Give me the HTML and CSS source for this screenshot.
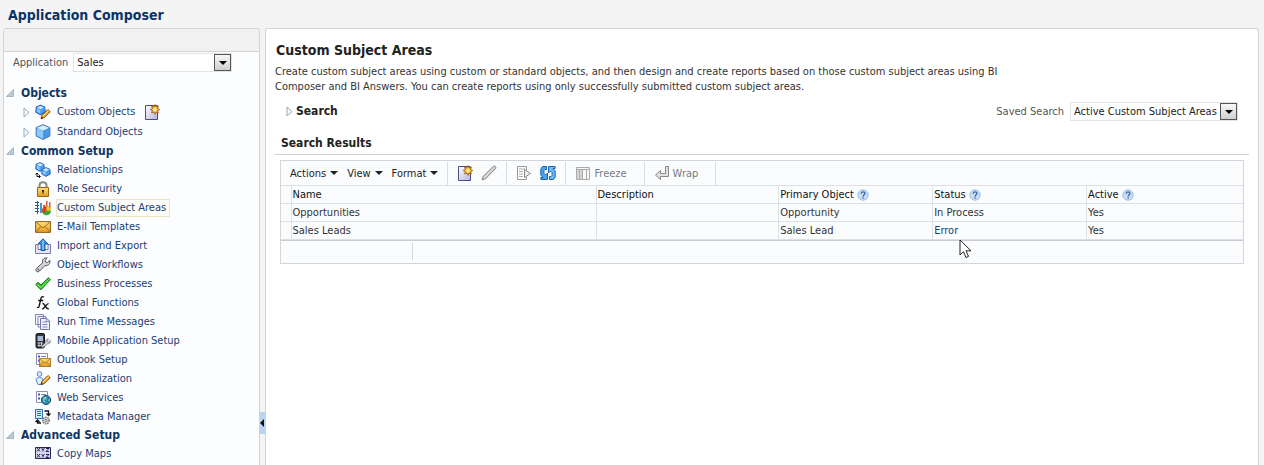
FILE: index.html
```
<!DOCTYPE html>
<html lang="en">
<head>
<meta charset="utf-8">
<title>Application Composer</title>
<link rel="stylesheet" href="styles.css">
</head>
<body>
<svg class="defs" aria-hidden="true">
  <defs>
    <linearGradient id="g-blue" x1="0" y1="0" x2="1" y2="1"><stop offset="0" stop-color="#e3f3ff"/><stop offset="1" stop-color="#3b8de0"/></linearGradient>
    <linearGradient id="g-gold" x1="0" y1="0" x2="0" y2="1"><stop offset="0" stop-color="#ffe27a"/><stop offset="1" stop-color="#e29a1c"/></linearGradient>
    <linearGradient id="g-page" x1="0" y1="0" x2="1" y2="1"><stop offset="0" stop-color="#ffffff"/><stop offset="1" stop-color="#b3b3dc"/></linearGradient>
    <symbol id="cube" viewBox="0 0 16 16">
      <path d="M8 .7 14.800 3.600V12L8 15.400 1.200 12V3.600Z" fill="#5aa8ee" stroke="#2466b0"/>
      <path d="M8 1.200 14.300 3.800 8 6.600 1.700 3.800Z" fill="#d9eeff"/>
      <path d="M1.700 4.200 8 7V14.900L1.700 11.700Z" fill="#8fc8fa"/>
      <path d="M8 7 14.300 4.200V11.700L8 14.900Z" fill="#4a97e4"/>
    </symbol>
    <symbol id="ball" viewBox="0 0 16 16">
      <path d="M8 1 14 3.500 15 11 8 15 1 11 2 3.500Z" fill="#4c9df0" stroke="#1d63bd" stroke-width="1.500" stroke-linejoin="round"/>
      <path d="M8 2 13 4 8 7 3 4Z" fill="#cfeaff"/><path d="M3 5.500 7.500 8V13.500L2.500 10.500Z" fill="#8ac6fb"/>
    </symbol>
    <symbol id="pencil-gold" viewBox="0 0 16 16">
      <path d="M1.500 14.500 3 10 11.500 1.500 14.800 4.600 6 13.300Z" fill="#f7ad30" stroke="#7a3d0c" stroke-width="1.400"/>
      <path d="M4.500 10.800 12.500 3" stroke="#ffe7a0" stroke-width="1.400"/><path d="M1.200 15 2.200 12 4.300 14Z" fill="#26160a"/>
    </symbol>
    <symbol id="new-page" viewBox="0 0 16 16">
      <path d="M1.500 1.500H13.500V15.500H1.500Z" fill="url(#g-page)" stroke="#4b4b86"/>
      <path d="M11 .6 12 3 14.400 2.300 13.600 4.600 15.700 5.600 13.600 6.600 14.400 8.900 12 8.100 11 10.400 10 8.100 7.600 8.900 8.400 6.600 6.300 5.600 8.400 4.600 7.600 2.300 10 3Z" fill="#ffc728" stroke="#9c4c12" stroke-width=".8"/>
      <circle cx="11" cy="5.600" r="1.600" fill="#fff3a8"/>
    </symbol>
    <symbol id="wrench" viewBox="0 0 16 16">
      <path d="M14.900 3.300 12.500 5.500 10.500 5 10 3.200 12.200 1.100C10 .3 7.600 1.600 7.400 4.200L7.600 5.800 1.500 11.400C.3 12.500 1 15 3.200 14.900L4.400 14.200 10 8.500C13.400 9 15.600 6.600 14.900 3.300Z" fill="#d6d6da" stroke="#55555c"/>
      <circle cx="3.400" cy="12.600" r=".9" fill="#55555c"/>
    </symbol>
    <symbol id="mail" viewBox="0 0 16 12">
      <path d="M.6.6H15.400V11.400H.6Z" fill="url(#g-gold)" stroke="#935f12"/>
      <path d="M1 1 8 7 15 1M1 11 6 5.400M15 11 10 5.400" fill="none" stroke="#a9681a"/>
    </symbol>
    <symbol id="help" viewBox="0 0 12 12">
      <circle cx="6" cy="6" r="5.200" fill="#c9def4" stroke="#9fbfe3"/>
      <path d="M4.100 4.700C4.100 2.200 8 2.300 8 4.400 8 5.800 6.100 5.700 6.100 7.400" fill="none" stroke="#2d5f9e" stroke-width="1.200"/><path d="M5.400 8.300H6.800V9.500H5.400Z" fill="#2d5f9e"/>
    </symbol>
    <symbol id="expand" viewBox="0 0 7 11"><path d="M1 1 6 5.500 1 10Z" fill="#f4f9fc" stroke="#92acbd"/></symbol>
    <symbol id="collapse" viewBox="0 0 8 8"><path d="M7.500 .5V7.500H.5Z" fill="#b9cbd8" stroke="#a3b7c6"/></symbol>
    <symbol id="down" viewBox="0 0 8 4"><path d="M0 0H8L4 4Z" fill="currentColor"/></symbol>
    <symbol id="list-doc" viewBox="0 0 16 16">
      <path d="M1.500 1.500H12.500V12.500H1.500Z" fill="#fff" stroke="#8a8cbb"/>
      <path d="M3 4.500H5M3 8.500H5" stroke="#3c5db5" stroke-width="2"/><path d="M6 4.500H11M6 8.500H10" stroke="#8185b5"/>
    </symbol>
  </defs>
</svg>

<header class="app-header"><h1>Application Composer</h1></header>

<div class="workspace">
  <aside class="sidebar">
    <div class="sidebar-band"></div>
    <div class="app-picker">
      <label for="application">Application</label>
      <span class="picker">
        <select id="application"><option>Sales</option></select>
        <span class="picker-arrow"><svg><use href="#down"/></svg></span>
      </span>
    </div>

    <nav class="tree">
      <h2><svg class="collapse"><use href="#collapse"/></svg>Objects</h2>
      <ul class="objects">
        <li><svg class="expand"><use href="#expand"/></svg>
          <svg class="icon" viewBox="0 0 16 16"><use href="#ball" width="11" height="12"/><use href="#pencil-gold" x="5" y="4" width="11" height="12"/></svg>
          <a href="#">Custom Objects</a>
          <button class="icon-button" aria-label="New custom object"><svg class="icon"><use href="#new-page"/></svg></button></li>
        <li><svg class="expand"><use href="#expand"/></svg><svg class="icon"><use href="#cube"/></svg><a href="#">Standard Objects</a></li>
      </ul>

      <h2><svg class="collapse"><use href="#collapse"/></svg>Common Setup</h2>
      <ul>
        <li><svg class="icon" viewBox="0 0 16 16"><use href="#ball" width="10" height="10"/><use href="#ball" x="6" y="5" width="10" height="10"/><path d="M2 11V14.500H5M.5 12.500 2 11 3.500 12.500M4 13 5.500 14.500 4 16" fill="none" stroke="#111"/></svg><a href="#">Relationships</a></li>
        <li><svg class="icon" viewBox="0 0 16 16"><path d="M4.500 8V4.500C4.500.3 11.500.3 11.500 4.500V8" fill="none" stroke="#8b8b8b" stroke-width="2"/><path d="M2.500 6.500H13.500V15.500H2.500Z" fill="url(#g-gold)" stroke="#9c6310"/><path d="M7 9H9V10.800H8.500V13H7.500V10.800H7Z" fill="#3d2505"/></svg><a href="#">Role Security</a></li>
        <li><svg class="icon" viewBox="0 0 16 16"><path d="M2.500 1V14M0 2.500H4M0 5.500H4M0 8.500H4M0 11.500H4" stroke="#2c5c96"/><path d="M5 3H7V13H5Z" fill="#4b91dc"/><path d="M8 5H10V12H8ZM11 1H12.500V8H11ZM14 2H15.500V8H14Z" fill="#dc5a32"/><circle cx="11.500" cy="10.800" r="4.500" fill="#35a83a"/><path d="M11.500 10.800V6.300A4.500 4.500 0 0 0 8 13.600Z" fill="#e33a24"/><path d="M11.500 10.800V6.300A4.500 4.500 0 0 1 16 10.800Z" fill="#ffbc26"/></svg><a class="selected" href="#">Custom Subject Areas</a></li>
        <li><svg class="icon"><use href="#mail"/></svg><a href="#">E-Mail Templates</a></li>
        <li><svg class="icon" viewBox="0 0 16 16"><path d="M.5 6.500H3V11.500H13V6.500H15.500V15.500H.5Z" fill="#e6e7f5" stroke="#777aae"/><path d="M8 .8 13 6H10V12.500H6V6H3Z" fill="#3c94ec" stroke="#154f9d"/><path d="M8 2.500V12" stroke="#a6dafd"/></svg><a href="#">Import and Export</a></li>
        <li><svg class="icon"><use href="#wrench"/></svg><a href="#">Object Workflows</a></li>
        <li><svg class="icon" viewBox="0 0 16 16"><path d="M.7 8.500 3 6.300 6 9 13.300 1.800 15.400 3.600 6 13.800Z" fill="#35c12e" stroke="#137b13"/><path d="M2 8.300 6 11.600 14 3.200" fill="none" stroke="#8bea6f"/></svg><a href="#">Business Processes</a></li>
        <li><svg class="icon" viewBox="0 0 16 16"><path d="M8.800 2.300C7.500.8 6.300 1.900 5.800 4L4.200 11C3.800 12.700 3 13 2 12.300M3.300 5.500H8.200" fill="none" stroke="#111" stroke-width="1.300"/><path d="M7.500 8.500C10 7.500 10.500 15 13.800 13.600M13.600 8.600C11 8.500 10 14 7.200 14" fill="none" stroke="#111" stroke-width="1.400"/></svg><a href="#">Global Functions</a></li>
        <li><svg class="icon" viewBox="0 0 16 16"><path d="M.5.5H8.500V10.500H.5ZM3 2.500H11V13H3Z" fill="#f7f7ff" stroke="#8083b5"/><path d="M5.500 4.500H12L14.500 7V15.500H5.500Z" fill="#f0f0fc" stroke="#7376aa"/><path d="M7.500 8H12M7.500 10.500H12.500M7.500 13H12.500M11.500 5V7.500H14" fill="none" stroke="#8589b8"/></svg><a href="#">Run Time Messages</a></li>
        <li><svg class="icon" viewBox="0 0 16 16"><rect x="1" y=".5" width="8.500" height="14.500" rx="1.500" fill="#32363f" stroke="#14161c"/><path d="M2.500 3H8V8H2.500Z" fill="#a7b9d4"/><path d="M2.500 10H8M2.500 12.500H8M4 9V14M6.500 9V14" stroke="#bcbfc8"/><use href="#wrench" x="6" y="5" width="10" height="11"/></svg><a href="#">Mobile Application Setup</a></li>
        <li><svg class="icon" viewBox="0 0 16 16"><use href="#list-doc"/><use href="#mail" x="4" y="6" width="12" height="9"/></svg><a href="#">Outlook Setup</a></li>
        <li><svg class="icon" viewBox="0 0 16 16"><circle cx="4.500" cy="3" r="2.300" fill="#dceeff" stroke="#4b8bcd"/><path d="M1 9C1 5.500 8 5.500 8 9L6 13.500H3Z" fill="#dceeff" stroke="#4b8bcd"/><use href="#pencil-gold" x="5" y="3" width="11" height="12"/></svg><a href="#">Personalization</a></li>
        <li><svg class="icon" viewBox="0 0 16 16"><use href="#list-doc"/><circle cx="11" cy="10" r="4.600" fill="#2f86b3" stroke="#1c5573"/><path d="M8 7.500 11 6.500 12 9 9.500 10 10.500 13 8.500 12ZM13 10 15 9 14 12Z" fill="#79cbb2"/></svg><a href="#">Web Services</a></li>
        <li><svg class="icon" viewBox="0 0 16 16"><path d="M.5.5H7.500V9.500H.5Z" fill="#d8eaff" stroke="#286db7"/><path d="M2 2.500H6M2 4.500H6M2 6.500H6" stroke="#286db7"/><path d="M9.500 2H13.500V6M11.500 4.500 13.500 6.500 15.500 4.500M6 14H2.500V11.500M.5 13 2.500 11 4.500 13" fill="none" stroke="#111" stroke-width="1.300"/><circle cx="11" cy="11.500" r="3.200" fill="#e0e0e0" stroke="#777" stroke-width="1.500" stroke-dasharray="1.500 .8"/><circle cx="11" cy="11.500" r="1.200" fill="#fff" stroke="#777"/></svg><a href="#">Metadata Manager</a></li>
      </ul>

      <h2><svg class="collapse"><use href="#collapse"/></svg>Advanced Setup</h2>
      <ul>
        <li><svg class="icon" viewBox="0 0 16 16"><path d="M.5 1.500H15.500V12.500H.5Z" fill="#d8d8ec" stroke="#27285b"/><path d="M2 2 5 5.500M5 2 2 5.500M6.500 2 8 4 9.500 2M8 4V5.500M11 2.500H14L11 5.500H14M2 8 5 11.500M5 8 2 11.500M6.500 8 8 10 9.500 8M8 10V11.500M11 8.500H14L11 11.500H14" fill="none" stroke="#27285b"/></svg><a href="#">Copy Maps</a></li>
      </ul>
    </nav>
  </aside>

  <div class="splitter"><button aria-label="Collapse pane"><svg viewBox="0 0 4 8"><path d="M4 0V8L0 4Z" fill="#111"/></svg></button></div>

  <main class="content">
    <h2 class="page-title">Custom Subject Areas</h2>
    <p class="intro">Create custom subject areas using custom or standard objects, and then design and create reports based on those custom subject areas using BI Composer and BI Answers. You can create reports using only successfully submitted custom subject areas.</p>

    <div class="search-row">
      <h3><svg class="expand"><use href="#expand"/></svg>Search</h3>
      <div class="saved">
        <label for="saved-search">Saved Search</label>
        <span class="picker">
          <select id="saved-search"><option>Active Custom Subject Areas</option></select>
          <span class="picker-arrow"><svg><use href="#down"/></svg></span>
        </span>
      </div>
    </div>

    <h3 class="results-title">Search Results</h3>

    <section class="results">
      <div class="toolbar">
        <div class="tool-group menus">
          <button>Actions<svg class="caret"><use href="#down"/></svg></button>
          <button>View<svg class="caret"><use href="#down"/></svg></button>
          <button>Format<svg class="caret"><use href="#down"/></svg></button>
        </div>
        <div class="tool-group">
          <button aria-label="Create"><svg class="icon"><use href="#new-page"/></svg></button>
          <button aria-label="Edit" disabled><svg class="icon" viewBox="0 0 16 16"><path d="M1 14.800 2 11.500 12.500 1.300C14 .5 15.500 2 14.700 3.500L4.500 13.800Z" fill="#c9c9c9" stroke="#858585"/><path d="M3 12.500 13.500 2.300" stroke="#eee"/></svg></button>
        </div>
        <div class="tool-group">
          <button aria-label="Submit" disabled><svg class="icon" viewBox="0 0 16 16"><path d="M10.500 5V1.500H1.500V14.500H10.500V12" fill="#fff" stroke="#999"/><path d="M3 4H9M3 6.500H7M3 9H7M3 11.500H7" stroke="#aaa"/><path d="M8.500 4.500 14.500 8.500 8.500 12.500Z" fill="#eee" stroke="#888"/></svg></button>
          <button aria-label="Refresh"><svg class="icon" viewBox="0 0 16 16"><path d="M6.500 1.500H2.500L.8 4V10L3 12.500H.8V14.500H7.500V8L5.500 10 4 8.500V5.500L5 4.500H6.500Z" fill="#49a5ef" stroke="#14559f" stroke-width=".9"/><path d="M9.500 14.500H13.500L15.200 12V6L13 3.500H15.200V1.500H8.500V8L10.500 6 12 7.500V10.500L11 11.500H9.500Z" fill="#68bafa" stroke="#14559f" stroke-width=".9"/></svg></button>
        </div>
        <div class="tool-group labelled">
          <button disabled><svg class="icon" viewBox="0 0 16 16"><path d="M1.500 2.500H14.500V14.500H1.500ZM1.500 4.500H14.500M4.500 4.500V14M7.500 4.500V14M11.500 4.500V14" fill="#f7f7f7" stroke="#aaa"/><path d="M2 5H7V14H2Z" fill="#bbb" opacity=".6"/></svg>Freeze</button>
        </div>
        <div class="tool-group labelled">
          <button disabled><svg class="icon" viewBox="0 0 16 16"><path d="M11.500 1.500H14.500V11.500H6.500V14.500L1.500 10 6.500 5.500V8.500H11.500Z" fill="#e1e1e1" stroke="#888"/></svg>Wrap</button>
        </div>
      </div>

      <table>
        <colgroup><col class="c-mark"><col class="c-name"><col class="c-desc"><col class="c-status"><col class="c-status"><col></colgroup>
        <thead>
          <tr><td></td><th>Name</th><th>Description</th><th>Primary Object <svg class="help"><use href="#help"/></svg></th><th>Status <svg class="help"><use href="#help"/></svg></th><th>Active <svg class="help"><use href="#help"/></svg></th></tr>
        </thead>
        <tbody>
          <tr><td></td><td>Opportunities</td><td></td><td>Opportunity</td><td>In Process</td><td>Yes</td></tr>
          <tr><td></td><td>Sales Leads</td><td></td><td>Sales Lead</td><td class="pointed"><a href="#">Error</a><svg class="cursor" viewBox="0 0 13 20"><path d="M1 1V16L4.500 12.700 7 18.500 9.500 17.400 7 11.800H12Z" fill="#fff" stroke="#222"/></svg></td><td>Yes</td></tr>
        </tbody>
      </table>
      <div class="table-foot"><span></span></div>
    </section>
  </main>
</div>
</body>
</html>
```
FILE: styles.css
```
* { box-sizing: border-box; }

body {
  margin: 0;
  min-height: 100vh;
  display: flex;
  flex-direction: column;
  background: #f4f4f4;
  color: #333;
  font: 11px/15px "DejaVu Sans Condensed", Tahoma, "DejaVu Sans", sans-serif;
}

h1, h2, h3, p, ul { margin: 0; padding: 0; }
ul { list-style: none; }
svg { display: block; flex: none; }
a { color: #1b4072; text-decoration: none; }

button {
  display: flex;
  align-items: center;
  padding: 0;
  border: 0;
  background: none;
  color: #222;
  font: inherit;
}

.defs { position: absolute; width: 0; height: 0; }
.icon { width: 16px; height: 16px; }
.expand { width: 7px; height: 11px; }
.collapse { width: 8px; height: 8px; }

.app-header { height: 28px; padding: 6px 8px 0; }
.app-header h1 { color: #0b3468; font-size: 14px; line-height: 18px; }

.workspace { flex: 1; display: flex; padding: 0 5px 0 3px; }

/* Navigation pane */
.sidebar {
  width: 257px;
  border: 1px solid #d2d5d8;
  border-bottom: 0;
  border-radius: 3px 3px 0 0;
  background: #fcfdff;
}
.sidebar-band { height: 23px; border-bottom: 1px solid #cfd1d4; background: #f1f1f1; }
.app-picker { display: flex; align-items: center; gap: 5px; padding: 1px 27px 0 9px; color: #555; }
.app-picker .picker { flex: 1; }

.picker { display: grid; grid-template-columns: 1fr 17px; border: 1px solid #e3e3df; background: #fff; }
.picker select {
  grid-area: 1 / 1 / 2 / 3;
  height: 17px;
  padding: 0 20px 0 3px;
  border: 0;
  background: none;
  appearance: none;
  color: #222;
  font: inherit;
}
.picker-arrow {
  grid-area: 1 / 2 / 2 / 3;
  display: grid;
  place-items: center;
  border: 1px solid #555;
  background: linear-gradient(#f8f8f8, #cfcfcf);
  color: #000;
  pointer-events: none;
}
.picker-arrow svg { width: 8px; height: 4px; }

.tree { padding-top: 12px; }
.tree h2 {
  display: flex;
  align-items: center;
  gap: 7px;
  height: 18px;
  padding-left: 2px;
  color: #0f3560;
  font-size: 12px;
}
.tree li { display: flex; align-items: center; gap: 5px; height: 19px; padding-left: 31px; }
.tree a { padding: 0 3px 1px 0; border: 1px solid transparent; }
.tree a.selected { border-color: #ece5c4; background: #fcfcf6; }
.tree .objects li { height: 20px; padding-left: 19px; }

.splitter { display: flex; flex-direction: column; justify-content: flex-end; width: 5px; padding-bottom: 31px; }
.splitter button { height: 22px; background: #b9d4ee; }
.splitter svg { width: 4px; height: 8px; }

/* Main pane */
.content {
  flex: 1;
  min-width: 0;
  padding: 12px 9px 0;
  border: 1px solid #d2d5d8;
  border-bottom: 0;
  border-radius: 3px 3px 0 0;
  background: #fff;
}
.page-title { padding-left: 1px; color: #222; font-size: 14px; line-height: 18px; }
.intro { max-width: 728px; padding-top: 5px; }
.search-row { display: flex; align-items: center; justify-content: space-between; padding: 8px 11px 0; }
.search-row h3 { display: flex; align-items: center; gap: 3px; color: #222; font-size: 12px; }
.saved { display: flex; align-items: center; gap: 6px; color: #555; }
.results-title {
  margin-top: 15px;
  padding: 0 6px 3px;
  border-bottom: 1px solid #cdd0d6;
  color: #222;
  font-size: 12px;
}

.results { margin: 5px 5px 0; border: 1px solid #d3d7dc; background: #fbfcfe; }
.toolbar { display: flex; align-items: center; height: 24px; }
.tool-group { display: flex; align-items: center; gap: 8px; height: 23px; padding: 0 9px; border-right: 1px solid #d9dce0; }
.tool-group.menus { gap: 9px; }
.tool-group.labelled { padding-right: 17px; }
.labelled button { gap: 3px; }
.toolbar button:disabled { color: #777c84; }
.caret { width: 8px; height: 4px; margin-left: 4px; }

table { width: 100%; border-collapse: collapse; table-layout: fixed; }
th, td {
  height: 18px;
  padding: 0 1px;
  border: 1px solid #dde0e4;
  font-weight: normal;
  text-align: left;
}
th { color: #111; }
tr > :first-child { border-left: 0; }
tr > :last-child { border-right: 0; }
.c-mark { width: 10px; }
.c-name { width: 305px; }
.c-desc { width: 19%; }
.c-status { width: 16%; }
.help { display: inline-block; width: 12px; height: 12px; vertical-align: -3px; }

.pointed { position: relative; }
.cursor { position: absolute; left: 26px; top: 17px; width: 13px; height: 20px; }

.table-foot { display: flex; height: 23px; padding: 2px 0 3px; border-top: 1px solid #c9cdd2; }
.table-foot span { width: 132px; border-right: 1px solid #d3d7dc; }
```
